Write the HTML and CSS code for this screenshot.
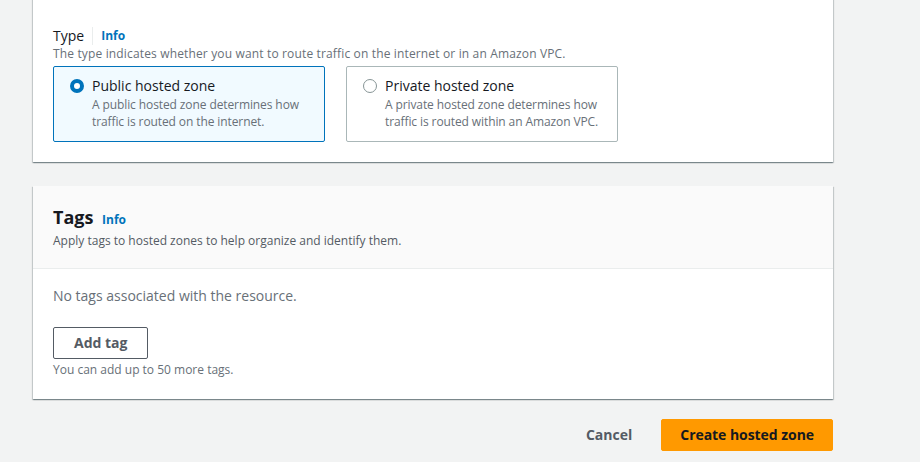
FILE: index.html
```html
<!DOCTYPE html>
<html lang="en">
<head>
<meta charset="utf-8">
<title>Create hosted zone</title>
<link rel="stylesheet" href="styles.css">
</head>
<body>
<div class="page">
  <section class="card card-config">
    <p class="clipped-hint">The description can have up to 256 characters. Optionally you may skip it.</p>
    <div class="field">
      <div class="field-label"><span class="label-text">Type</span><a class="info-link divided" href="#">Info</a></div>
      <p class="field-desc">The type indicates whether you want to route traffic on the internet or in an Amazon VPC.</p>
      <div class="tiles">
        <label class="tile selected">
          <span class="radio checked"></span>
          <span class="tile-body">
            <span class="tile-title">Public hosted zone</span>
            <span class="tile-desc">A public hosted zone determines how traffic is routed on the internet.</span>
          </span>
        </label>
        <label class="tile">
          <span class="radio"></span>
          <span class="tile-body">
            <span class="tile-title">Private hosted zone</span>
            <span class="tile-desc">A private hosted zone determines how traffic is routed within an Amazon VPC.</span>
          </span>
        </label>
      </div>
    </div>
  </section>

  <section class="card card-tags">
    <header class="card-header">
      <h2 class="card-title">Tags <a class="info-link" href="#">Info</a></h2>
      <p class="header-desc">Apply tags to hosted zones to help organize and identify them.</p>
    </header>
    <div class="card-body">
      <p class="empty-text">No tags associated with the resource.</p>
      <button class="btn btn-normal" type="button">Add tag</button>
      <p class="hint">You can add up to 50 more tags.</p>
    </div>
  </section>

  <div class="actions">
    <button class="btn btn-link" type="button">Cancel</button>
    <button class="btn btn-primary" type="button">Create hosted zone</button>
  </div>
</div>
</body>
</html>
```

FILE: styles.css
```css
* { box-sizing: border-box; }

html, body {
  margin: 0;
  padding: 0;
  background: #f2f3f3;
  font-family: "Open Sans", "Noto Sans", Arial, sans-serif;
  color: #16191f;
  overflow: hidden;
}

.page {
  width: 800px;
  margin-left: 33px;
}

p { margin: 0; }

.card {
  background: #ffffff;
  box-shadow: 0 1px 1px 0 rgba(0, 28, 36, 0.3),
              1px 1px 1px 0 rgba(0, 28, 36, 0.15),
              -1px 1px 1px 0 rgba(0, 28, 36, 0.15);
}

.card-config {
  margin-top: -15px;
  padding: 0 20px 20px;
}

.clipped-hint {
  font-size: 12px;
  line-height: 16px;
  color: #687078;
}

.field { margin-top: 25px; }

.field-label {
  display: flex;
  align-items: center;
  font-size: 14px;
  line-height: 20px;
}

.label-text { color: #16191f; }

.info-link {
  color: #0073bb;
  font-weight: 700;
  font-size: 12px;
  text-decoration: none;
}

.info-link.divided {
  margin-left: 8px;
  padding-left: 8px;
  border-left: 1px solid #eaeded;
  line-height: 18px;
}

.field-desc {
  font-size: 12px;
  line-height: 16px;
  color: #687078;
  letter-spacing: 0.15px;
}

.tiles {
  margin-top: 4px;
  display: grid;
  grid-template-columns: 272px 272px;
  column-gap: 21px;
}

.tile {
  display: flex;
  align-items: flex-start;
  gap: 8px;
  border: 1px solid #aab7b8;
  border-radius: 2px;
  padding: 9px 4px 11px 16px;
  background: #ffffff;
}

.tile.selected {
  border-color: #0073bb;
  background: #f1faff;
}

.radio {
  flex: none;
  width: 14px;
  height: 14px;
  margin-top: 3px;
  border-radius: 50%;
  border: 1.5px solid #879596;
  background: #ffffff;
}

.radio.checked {
  border: 4px solid #0073bb;
}

.tile-body {
  display: flex;
  flex-direction: column;
}

.tile-title {
  font-size: 14px;
  line-height: 20px;
  color: #16191f;
}

.tile-desc {
  font-size: 12px;
  line-height: 17px;
  color: #687078;
  letter-spacing: -0.1px;
}

.card-tags { margin-top: 24px; }

.card-header {
  background: #fafafa;
  border-bottom: 1px solid #eaeded;
  padding: 19px 20px 19px;
}

.card-title {
  margin: 0;
  font-size: 18px;
  line-height: 24px;
  font-weight: 700;
  color: #16191f;
}

.card-title .info-link { margin-left: 4px; }

.header-desc {
  margin-top: 1px;
  font-size: 12px;
  line-height: 16px;
  color: #545b64;
}

.card-body {
  padding: 17px 20px 21px;
}

.empty-text {
  font-size: 14px;
  line-height: 20px;
  color: #687078;
}

.btn {
  font-family: inherit;
  font-size: 14px;
  font-weight: 700;
  line-height: 22px;
  border-radius: 2px;
  padding: 4px 20px;
  cursor: pointer;
}

.btn-normal {
  margin-top: 21px;
  background: #ffffff;
  border: 1px solid #545b64;
  color: #545b64;
}

.hint {
  margin-top: 3px;
  font-size: 12px;
  line-height: 16px;
  color: #687078;
}

.actions {
  margin-top: 20px;
  display: flex;
  justify-content: flex-end;
  gap: 8px;
}

.btn-link {
  background: transparent;
  border: 1px solid transparent;
  color: #545b64;
}

.btn-primary {
  background: #ff9900;
  border: 1px solid #ff9900;
  color: #16191f;
  padding: 4px 18px;
  letter-spacing: -0.05px;
}
```
